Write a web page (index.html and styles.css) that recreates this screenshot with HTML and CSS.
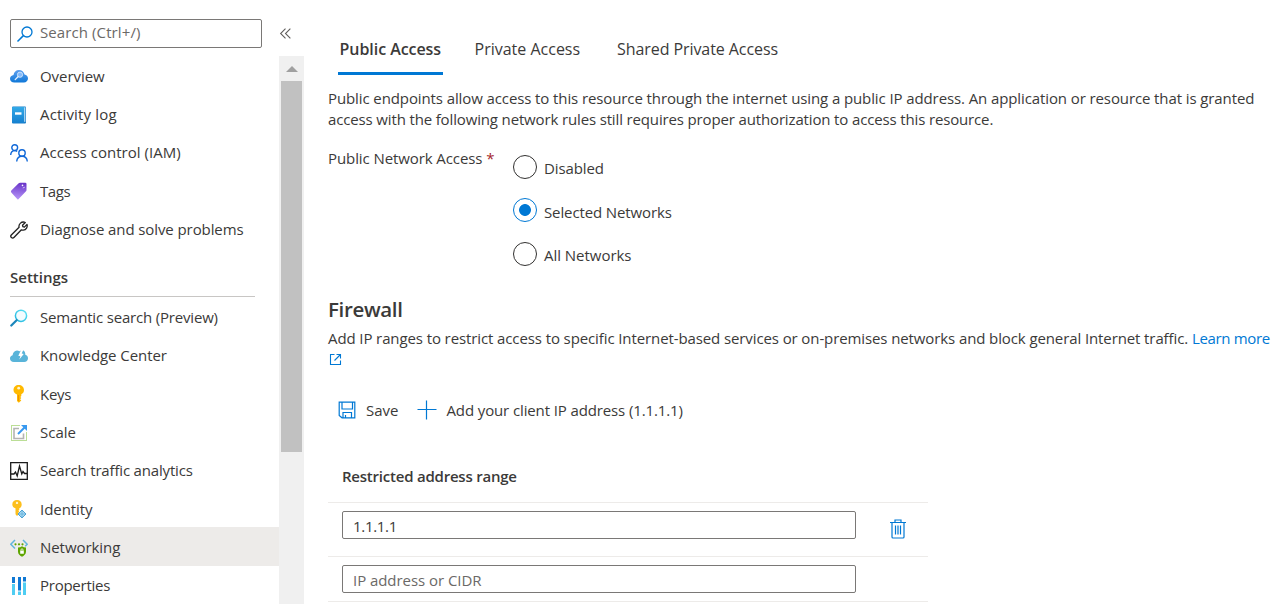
FILE: index.html
```
<!DOCTYPE html>
<html lang="en">
<head>
<meta charset="utf-8">
<title>Networking</title>
<link rel="stylesheet" href="styles.css">
</head>
<body>
<div class="app">
  <aside class="sidebar">
    <div class="search-row">
      <div class="search">
        <svg class="search-icon" viewBox="0 0 18 18"><circle cx="11" cy="7" r="5" fill="none" stroke="#0078d4" stroke-width="1.3"/><path d="M7.4 10.6 1.5 16.5" stroke="#0078d4" stroke-width="1.5"/></svg>
        <span class="t search-text">Search (Ctrl+/)</span>
      </div>
      <svg class="collapse" viewBox="0 0 12 12"><path d="M6 1.500 1.500 6 6 10.500M10.500 1.500 6 6l4.500 4.500" fill="none" stroke="#605e5c" stroke-width="1"/></svg>
    </div>
    <div class="side-body">
      <nav class="menu">
        <div class="list">
        <a class="item"><svg class="icon" viewBox="0 0 18 18"><defs><linearGradient id="cloud" x2="0" y2="1"><stop stop-color="#5ea0ef"/><stop offset="1" stop-color="#0f78d8"/></linearGradient></defs><path d="M4.300 15.500C1.800 15.500 0 14 0 11.700 0 9.700 1.500 8.200 3.500 8c.4-3 2.500-5 5.500-5 2.800 0 4.900 1.700 5.500 4.600 2 .2 3.500 1.800 3.500 3.900 0 2.300-1.800 4-4.100 4z" fill="url(#cloud)"/><circle cx="10" cy="7.700" r="2.600" fill="#83b9f9" stroke="#d3e6fc" stroke-width=".9"/><path d="m8 9.800-2.800 2.800" stroke="#e6f1fd" stroke-width="1.300" stroke-linecap="round"/></svg><span class="t w-overview">Overview</span></a>
        <a class="item"><svg class="icon" viewBox="0 0 18 18"><defs><linearGradient id="book" x2="0" y2="1"><stop stop-color="#32a9e8"/><stop offset="1" stop-color="#1580d0"/></linearGradient></defs><rect x="2" y=".5" width="14" height="17" rx="1" fill="#1b7fc8"/><path d="M4 1.300h11.300v14.500H4z" fill="#dceffa"/><path d="M2 2q0-1 1-1h11.300v16H3q-1 0-1-1z" fill="url(#book)"/><path d="M5 6.300h6.500v2.400H5z" fill="#fff"/></svg><span class="t w-activity">Activity log</span></a>
        <a class="item"><svg class="icon" viewBox="0 0 18 18" fill="none" stroke="#1068d8" stroke-width="1.400"><circle cx="4.700" cy="3.600" r="2.900"/><path d="M.7 11c0-2.700 1.700-4.400 4-4.400 1 0 1.800.3 2.500.8"/><circle cx="12" cy="9" r="3.200"/><path d="M6.700 17.500c.3-3.300 2.300-5.200 5.300-5.200s5 1.900 5.300 5.200"/></svg><span class="t w-access">Access control (IAM)</span></a>
        <a class="item"><svg class="icon" viewBox="0 0 18 18"><defs><linearGradient id="tag" x1=".4" y1="1" x2=".5" y2="0"><stop stop-color="#b796f9"/><stop offset="1" stop-color="#6a35c9"/></linearGradient></defs><path d="M1.300 8.500 8.700 1.200Q9.300.7 10 .7h5.200q1.300 0 1.300 1.300v6q0 .7-.5 1.200L8.400 17.200q-.5.500-1 0L1.300 10.500q-.8-1 0-2z" fill="url(#tag)"/><circle cx="12.500" cy="3.400" r=".8" fill="#fff"/><path d="m12.800 6 2-.8" stroke="#d9c7fb" stroke-width=".9"/></svg><span class="t w-tags">Tags</span></a>
        <a class="item"><svg class="icon" viewBox="0 0 18 18" fill="none" stroke="#222" stroke-width="1.300" stroke-linejoin="round"><path d="M15.300 1.500 12.500 4.300l.4 1.400 1.500.4L17 3.400c.8 2.500-.7 5.600-3.700 5.700-.7 0-1.300-.1-1.900-.3l-7.500 7.700c-1.500 1.500-4.200-.6-2.600-2.500l7.800-7.700C8.300 3.300 11.500-.2 15.300 1.500z"/></svg><span class="t w-diagnose">Diagnose and solve problems</span></a>
        </div>
        <h2 class="group"><span class="t">Settings</span></h2>
        <div class="list settings">
        <a class="item"><svg class="icon" viewBox="0 0 18 18"><defs><linearGradient id="lens" x1="1" y1="0" x2="0" y2="1"><stop stop-color="#5be3f5"/><stop offset="1" stop-color="#25b5de"/></linearGradient></defs><circle cx="11" cy="6.800" r="5.600" fill="#f3fcff" stroke="url(#lens)" stroke-width="1.500"/><path d="m6.600 11.200-5.300 5.300" stroke="#1b86bb" stroke-width="2.200" stroke-linecap="round"/></svg><span class="t w-semantic">Semantic search (Preview)</span></a>
        <a class="item"><svg class="icon" viewBox="0 0 18 18"><path d="M3.800 15C1.500 15 0 13.600 0 11.600c0-1.700 1-3 2.600-3.300C2.800 5.700 4.500 3.500 7 3.500c1 0 1.700.2 2.400.7L12.500 3c2 .5 3 2.800 2.800 4.800 1.700.4 2.700 1.800 2.700 3.500 0 2.200-1.600 3.700-3.800 3.700z" fill="#59b4d9"/><path d="M11.300 2.500 8.300 8.800l2.100.4-1.100 3.400 4.400-5.500-2-.5 1.800-4.100z" fill="#fff"/></svg><span class="t w-knowledge">Knowledge Center</span></a>
        <a class="item"><svg class="icon" viewBox="0 0 18 18"><path d="M8.700 0c3 0 5.300 2 5.300 5 0 2-1.100 3.600-2.700 4.300V11l-1 1 1 1-1.200 1.200 1.200 1.200-2.500 2.400L7 16V9.500C4.900 8.900 3.500 7.200 3.500 5c0-3 2.200-5 5.200-5z" fill="#ffb900"/><path d="M8 10h1v6H8z" fill="#f29000"/><circle cx="8.700" cy="3.200" r="1.400" fill="#fff3cd"/></svg><span class="t w-keys">Keys</span></a>
        <a class="item"><svg class="icon" viewBox="0 0 18 18"><path d="M1.500 1.500h15v15h-15z" fill="none" stroke="#76bc2d" stroke-dasharray="1 1"/><path d="M9 4.500H4v10h9.500V9.500" fill="none" stroke="#b3b3b3" stroke-width="1.600"/><path d="M10 .5h7V8h-7z" fill="#fff"/><path d="m8 10 7-7" stroke="#3999f0" stroke-width="2"/><path d="M11 1h6v6z" fill="#3999f0"/></svg><span class="t">Scale</span></a>
        <a class="item"><svg class="icon" viewBox="0 0 18 18" fill="none" stroke="#1b1b1b" stroke-width="1.300"><path d="M.7.7h16.600v16.600H.7z"/><path d="M1 12h3l1.500-2 1.700 4 2.300-10 2.300 8L13 9.500l1.500 2H17"/></svg><span class="t w-traffic">Search traffic analytics</span></a>
        <a class="item"><svg class="icon" viewBox="0 0 18 18"><path d="M7 0c2.800 0 4.700 1.700 4.700 4.400 0 1.900-1 3.200-2.400 3.800v1.600l-.9.900.9.900-1 1 1 1.100L7 16l-1.500-1.700V8.200C3.600 7.600 2.300 6.300 2.300 4.400 2.300 1.700 4.200 0 7 0z" fill="#fdbf1c"/><circle cx="7" cy="2.900" r="1.200" fill="#fff3cd"/><path d="m12 10 4 4-4 4-4-4z" fill="#a9d8f0" stroke="#4ea3d4"/><path d="M12 11v6M9 14h6" stroke="#5fb0dc" stroke-width=".8"/></svg><span class="t w-overview">Identity</span></a>
        <a class="item selected"><svg class="icon" viewBox="0 0 18 18"><path d="M5 1 .8 5.300 5 9.600M13 1l4.200 4.300-2 2" fill="none" stroke="#62b5dd" stroke-width="1.500"/><circle cx="5.500" cy="5.300" r="1.100" fill="#5ea500"/><circle cx="9" cy="5.300" r="1.100" fill="#5ea500"/><circle cx="12.500" cy="5.300" r="1.100" fill="#5ea500"/><path d="M8 8.500q2.500 0 4-1.200 1.500 1.200 4 1.200v4.300c0 2.400-2.200 4-4 5-1.800-1-4-2.600-4-5z" fill="#5ea500"/><path d="M10.200 11.700h3.600v3h-3.600z" fill="#fff"/><path d="M11 12v-1.200q0-1 1-1t1 1V12" fill="none" stroke="#fff" stroke-width=".8"/></svg><span class="t w-overview">Networking</span></a>
        <a class="item"><svg class="icon" viewBox="0 0 18 18"><path d="M2 0h3v6H2zM8 0h3v13.500H8zM13 0h3v4.500h-3z" fill="#0f78d4"/><path d="M2 7h3v11H2zM8 14.500h3V18H8zM13 5.500h3V18h-3z" fill="#4fcdf2"/></svg><span class="t w-properties">Properties</span></a>
        </div>
      </nav>
      <div class="scrollbar"><div class="arrow"></div><div class="thumb"></div></div>
    </div>
  </aside>
  <main class="content">
    <div class="tabs">
      <div class="tab active"><span class="t">Public Access</span></div>
      <div class="tab"><span class="t">Private Access</span></div>
      <div class="tab shared"><span class="t">Shared Private Access</span></div>
    </div>
    <p class="intro"><span class="t intro-first">Public endpoints allow access to this resource through the internet using a public IP address. An application or resource that is granted</span><br><span class="t intro-second">access with the following network rules still requires proper authorization to access this resource.</span></p>
    <div class="field">
      <div class="label"><span class="t">Public Network Access</span> <span class="req">*</span></div>
      <div class="radios">
        <div class="option"><span class="radio"></span><span class="t">Disabled</span></div>
        <div class="option"><span class="radio on"></span><span class="t">Selected Networks</span></div>
        <div class="option all"><span class="radio"></span><span class="t">All Networks</span></div>
      </div>
    </div>
    <h1 class="title"><span class="t">Firewall</span></h1>
    <p class="desc"><span class="t desc-text">Add IP ranges to restrict access to specific Internet-based services or on-premises networks and block general Internet traffic.</span> <a class="link"><span class="t link-text">Learn more</span><br><svg class="ext" viewBox="0 0 13 13" fill="none" stroke="#0078d4" stroke-width="1.100"><path d="M5.500 1.500H1.500v10h10v-4M7.500 1.500h4v4M11.500 1.500l-6 6"/></svg></a></p>
    <div class="toolbar">
      <svg class="save" viewBox="0 0 18 18" fill="none" stroke="#0078d4" stroke-width="1.200"><path d="M1.200 1.200h15.600v15.600H4L1.200 14.500zM4 1.500v6.500h10.500V1.500M5 16.500V11.500h8.500v5M7.500 14v2.500"/></svg>
      <span class="t cmd">Save</span>
      <svg class="plus" viewBox="0 0 20 20"><path d="M.5 9.500h19M9.500.5v19" stroke="#0078d4" stroke-width="1.200"/></svg>
      <span class="t cmd add">Add your client IP address (1.1.1.1)</span>
    </div>
    <section class="table">
      <div class="head"><span class="t">Restricted address range</span></div>
      <div class="row"><div class="input"><span class="t ip">1.1.1.1</span></div>
        <svg class="trash" viewBox="0 0 16 20" fill="none" stroke="#0078d4" stroke-width="1.200"><path d="M0 3.500h16M5 3.500V1h6v2.500M2 3.500V18q0 1 1 1h10q1 0 1-1V3.500M5.500 6.500v9M8 6.500v9M10.500 6.500v9"/></svg>
      </div>
      <div class="row last"><div class="input hint"><span class="t">IP address or CIDR</span></div></div>
    </section>
  </main>
</div>
</body>
</html>
```

FILE: styles.css
```
* { box-sizing: border-box; }
body { margin: 0; background: #fff; color: #3b3a39; font: 15px/21px "Open Sans", "Noto Sans", sans-serif; }
h1, h2, p { margin: 0; font-weight: 400; }
svg { display: block; flex: none; }
.t { white-space: nowrap; }
.app { display: flex; width: 1287px; height: 604px; overflow: hidden; }

/* Sidebar */
.sidebar { width: 304px; display: flex; flex-direction: column; flex: none; }
.search-row { height: 56px; padding: 19px 0 0 10px; display: flex; align-items: flex-start; gap: 17px; }
.search { width: 252px; height: 29px; border: 1px solid #7a7876; border-radius: 2px; display: flex; align-items: center; padding-left: 5px; gap: 6px; color: #6b6967; }
.search-icon { width: 18px; height: 18px; }
.search-text { letter-spacing: .1px; padding-bottom: 2px; }
.collapse { width: 13px; height: 13px; margin-top: 8px; }
.side-body { flex: 1; display: flex; min-height: 0; }
.menu { width: 279px; padding-top: 1px; overflow: hidden; }
.item { display: flex; align-items: center; height: 38.35px; padding-left: 10px; gap: 12px; }
.settings .item { padding-top: 2.4px; }
.icon { width: 18px; height: 18px; }
.selected { background: #edebe9; }
.group { font-size: 15px; font-weight: 600; height: 48px; margin: 0 24px .5px 10px; padding-top: 18px; border-bottom: 1px solid #c8c6c4; }
.w-overview { letter-spacing: -.05px; }
.w-activity { letter-spacing: .16px; }
.w-access { letter-spacing: .03px; }
.w-tags { letter-spacing: -.4px; }
.w-diagnose { letter-spacing: -.09px; }
.w-semantic { letter-spacing: -.18px; }
.w-knowledge { letter-spacing: -.06px; }
.w-keys { letter-spacing: -.25px; }
.w-traffic { letter-spacing: -.17px; }
.w-properties { letter-spacing: -.25px; }
.scrollbar { width: 25px; background: #f0f0f0; padding: 10px 2px 0; }
.arrow { width: 0; margin: 0 auto; border: 6px solid transparent; border-top: 0; border-bottom: 6px solid #a0a0a0; }
.thumb { height: 371px; margin-top: 9px; background: #c1c1c1; }

/* Main panel */
.content { flex: 1; min-width: 0; padding-left: 24px; }
.tabs { display: flex; height: 75px; padding: 38px 0 0 10px; gap: 30px; font-size: 16px; line-height: 23px; }
.tab { height: 37px; padding: 0 1.5px; }
.active { width: 105px; font-weight: 600; letter-spacing: -.05px; border-bottom: 3px solid #0078d4; }
.shared { margin-left: 4px; letter-spacing: -.08px; }
.intro { margin-top: 13px; }
.intro-first { letter-spacing: -.103px; }
.intro-second { letter-spacing: -.145px; }
.field { display: flex; margin-top: 18px; }
.label { width: 185px; letter-spacing: -.09px; }
.req { color: #a4262c; }
.radios { padding-top: 7px; letter-spacing: -.12px; }
.option { display: flex; gap: 7px; height: 43.4px; }
.option .t { padding-top: 3.4px; }
.all { letter-spacing: -.03px; height: 44.2px; }
.radio { width: 24px; height: 24px; border: 1px solid #323130; border-radius: 50%; }
.on { border-color: #0078d4; background: radial-gradient(circle, #0078d4 5.500px, transparent 6.300px); }
.title { font-size: 20.5px; line-height: 28px; font-weight: 600; letter-spacing: -.35px; margin-top: 9px; }
.desc { margin-top: 5px; white-space: nowrap; }
.desc-text { letter-spacing: -.105px; }
.link { color: #0078d4; }
.link-text { letter-spacing: -.35px; }
.ext { width: 13px; height: 13px; margin: 4px 0 0 1px; }
.toolbar { display: flex; align-items: center; margin-top: 33px; padding-left: 10px; height: 22px; }
.save { width: 18px; height: 18px; margin-right: 10px; }
.plus { width: 20px; height: 20px; margin: 0 9px 0 19px; }
.cmd { padding-top: 1px; }
.add { letter-spacing: -.12px; }

/* Address table */
.table { width: 600px; margin-top: 45px; }
.head { height: 36px; padding-left: 14px; font-weight: 600; letter-spacing: -.22px; }
.row { height: 54px; border-top: 1px solid #edebe9; padding: 8px 0 0 14px; display: flex; gap: 34px; }
.last { height: 46px; border-bottom: 1px solid #edebe9; }
.input { width: 514px; height: 28px; border: 1px solid #7a7876; border-radius: 2px; padding: 4px 10px; }
.ip { letter-spacing: -.3px; }
.hint { color: #6b6967; letter-spacing: -.05px; }
.trash { width: 16px; height: 20px; margin-top: 8px; }
```
